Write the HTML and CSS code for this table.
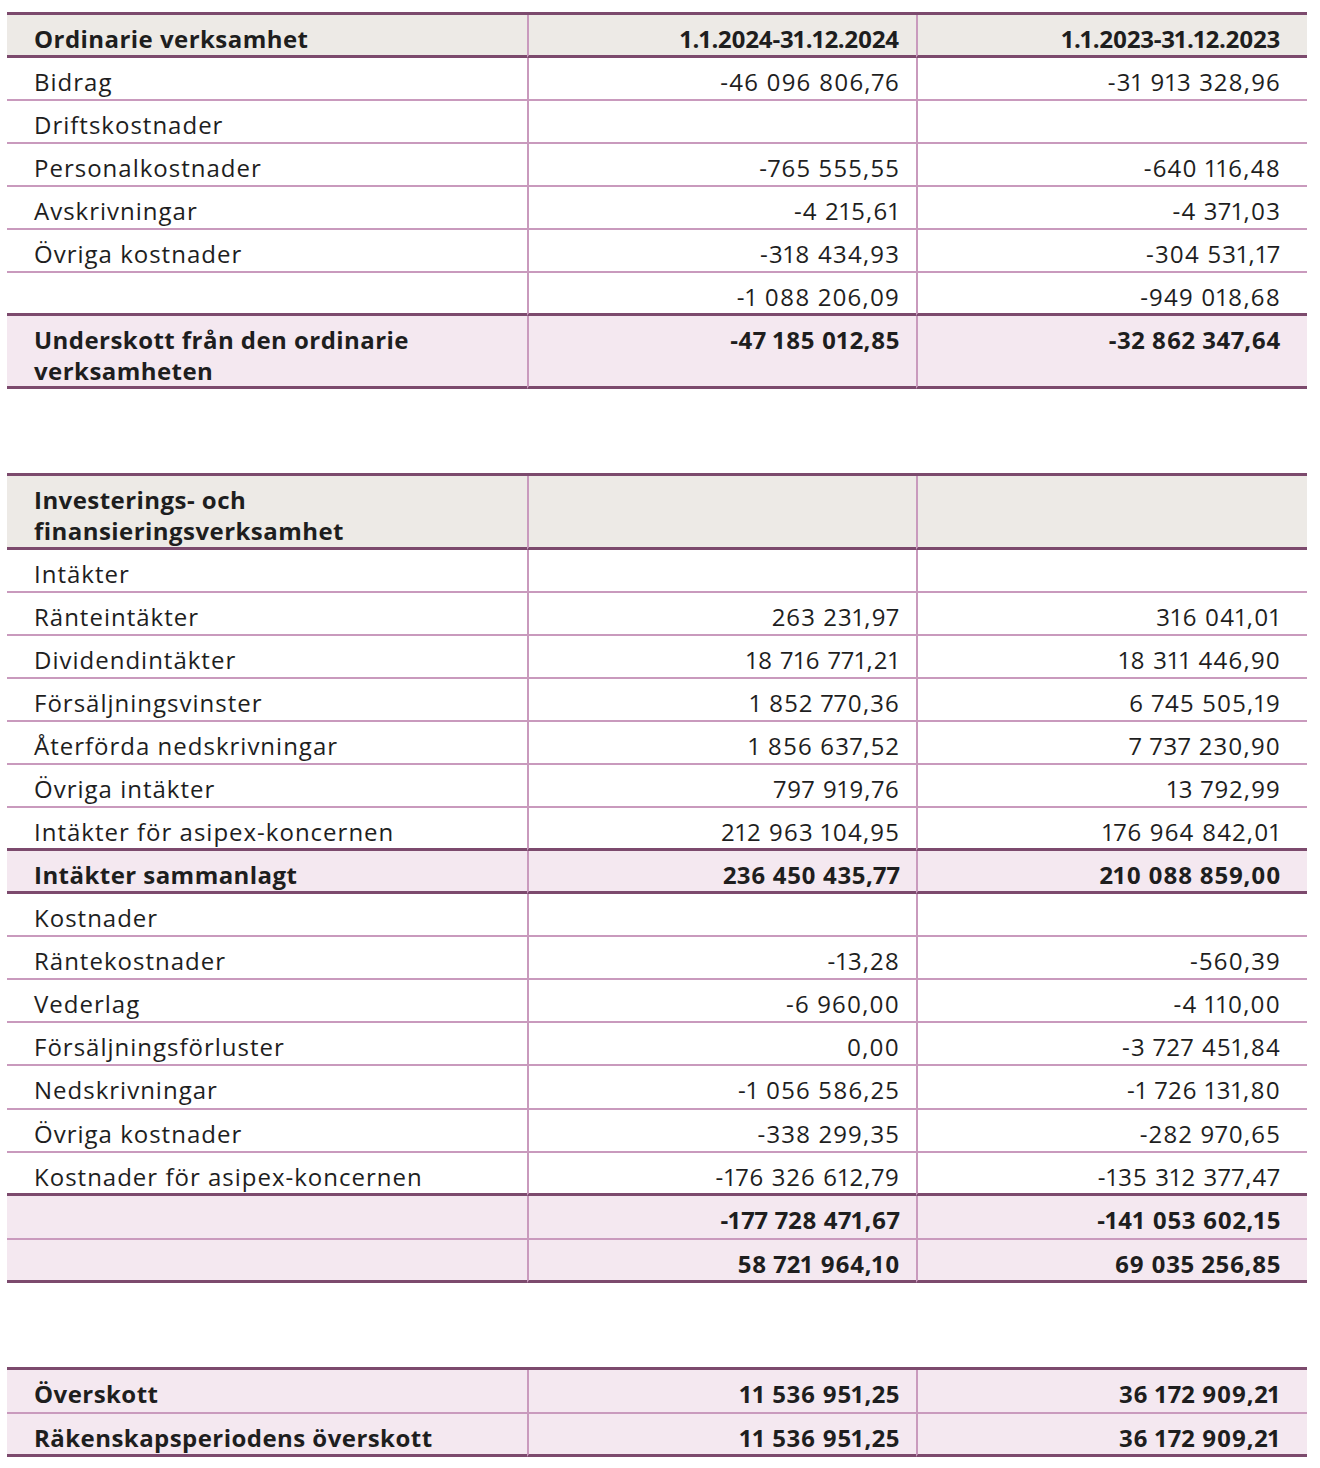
FILE: index.html
```html
<!DOCTYPE html>
<html lang="sv">
<head>
<meta charset="utf-8">
<title>Resultaträkning</title>
<link rel="stylesheet" href="styles.css">
</head>
<body>
<main class="page">
  <table class="fin">
    <colgroup><col class="c1"><col class="c2"><col class="c3"></colgroup>
    <tr class="head thick">
      <td>Ordinarie verksamhet</td>
      <td class="num date">1.1.2024-31.12.2024</td>
      <td class="num date">1.1.2023-31.12.2023</td>
    </tr>
    <tr><td>Bidrag</td><td class="num">-46 096 806,76</td><td class="num">-31 913 328,96</td></tr>
    <tr><td>Driftskostnader</td><td class="num"></td><td class="num"></td></tr>
    <tr><td>Personalkostnader</td><td class="num">-765 555,55</td><td class="num">-640 116,48</td></tr>
    <tr><td>Avskrivningar</td><td class="num">-4 215,61</td><td class="num">-4 371,03</td></tr>
    <tr><td>Övriga kostnader</td><td class="num">-318 434,93</td><td class="num">-304 531,17</td></tr>
    <tr class="thick"><td></td><td class="num">-1 088 206,09</td><td class="num">-949 018,68</td></tr>
    <tr class="sum thick two"><td>Underskott från den ordinarie verksamheten</td><td class="num">-47 185 012,85</td><td class="num">-32 862 347,64</td></tr>
  </table>

  <table class="fin gap">
    <colgroup><col class="c1"><col class="c2"><col class="c3"></colgroup>
    <tr class="head thick two">
      <td>Investerings- och<br>finansieringsverksamhet</td>
      <td class="num"></td>
      <td class="num"></td>
    </tr>
    <tr><td>Intäkter</td><td class="num"></td><td class="num"></td></tr>
    <tr><td>Ränteintäkter</td><td class="num">263 231,97</td><td class="num">316 041,01</td></tr>
    <tr><td>Dividendintäkter</td><td class="num">18 716 771,21</td><td class="num">18 311 446,90</td></tr>
    <tr><td>Försäljningsvinster</td><td class="num">1 852 770,36</td><td class="num">6 745 505,19</td></tr>
    <tr><td>Återförda nedskrivningar</td><td class="num">1 856 637,52</td><td class="num">7 737 230,90</td></tr>
    <tr><td>Övriga intäkter</td><td class="num">797 919,76</td><td class="num">13 792,99</td></tr>
    <tr class="thick"><td>Intäkter för asipex-koncernen</td><td class="num">212 963 104,95</td><td class="num">176 964 842,01</td></tr>
    <tr class="sum thick"><td>Intäkter sammanlagt</td><td class="num">236 450 435,77</td><td class="num">210 088 859,00</td></tr>
    <tr><td>Kostnader</td><td class="num"></td><td class="num"></td></tr>
    <tr><td>Räntekostnader</td><td class="num">-13,28</td><td class="num">-560,39</td></tr>
    <tr><td>Vederlag</td><td class="num">-6 960,00</td><td class="num">-4 110,00</td></tr>
    <tr><td>Försäljningsförluster</td><td class="num">0,00</td><td class="num">-3 727 451,84</td></tr>
    <tr class="tall"><td>Nedskrivningar</td><td class="num">-1 056 586,25</td><td class="num">-1 726 131,80</td></tr>
    <tr><td>Övriga kostnader</td><td class="num">-338 299,35</td><td class="num">-282 970,65</td></tr>
    <tr class="thick"><td>Kostnader för asipex-koncernen</td><td class="num">-176 326 612,79</td><td class="num">-135 312 377,47</td></tr>
    <tr class="sum tall"><td></td><td class="num">-177 728 471,67</td><td class="num">-141 053 602,15</td></tr>
    <tr class="sum thick"><td></td><td class="num">58 721 964,10</td><td class="num">69 035 256,85</td></tr>
  </table>

  <table class="fin gap">
    <colgroup><col class="c1"><col class="c2"><col class="c3"></colgroup>
    <tr class="sum tall"><td>Överskott</td><td class="num">11 536 951,25</td><td class="num">36 172 909,21</td></tr>
    <tr class="sum thick"><td>Räkenskapsperiodens överskott</td><td class="num">11 536 951,25</td><td class="num">36 172 909,21</td></tr>
  </table>
</main>
</body>
</html>
```
FILE: styles.css
```css
html, body {
  margin: 0;
  padding: 0;
  background: #ffffff;
}

.page {
  padding: 12px 13px 12px 7px;
  font-family: "Open Sans", "Liberation Sans", sans-serif;
  color: #1e1e1e;
}

.fin {
  width: 1300px;
  table-layout: fixed;
  border-collapse: separate;
  border-spacing: 0;
  border-top: 3px solid #7c4a6d;
}

.fin.gap {
  margin-top: 84px;
}

.c1 { width: 520px; }
.c2 { width: 389px; }
.c3 { width: 391px; }

.fin td {
  box-sizing: border-box;
  height: 43px;
  padding: 8px 27px 0 27px;
  font-size: 24px;
  line-height: 31px;
  letter-spacing: 1px;
  vertical-align: top;
  text-align: left;
  border-bottom: 2px solid #c99abd;
  white-space: nowrap;
}

.fin td + td {
  border-left: 2px solid #c99abd;
}

.fin td.num {
  text-align: right;
  letter-spacing: 1.2px;
  padding-right: 26px;
  font-variant-numeric: proportional-nums;
}

.fin td.num:nth-child(2) {
  padding-right: 16px;
}

.fin .tall td {
  height: 44px;
}

.fin .two td {
  height: 73px;
  white-space: normal;
}

.fin .head.two td {
  height: 74px;
}

.fin .thick td {
  border-bottom: 3px solid #7c4a6d;
}

.fin .head td,
.fin .sum td {
  font-weight: 700;
  letter-spacing: 0.45px;
}

.fin .head td {
  background: #edeae6;
}

.fin .sum td {
  background: #f4e8f0;
}

.fin .sum td.num {
  letter-spacing: 0.5px;
}

.fin .head td.date {
  letter-spacing: -0.2px;
  padding-right: 27px;
}

.fin .head td.date:nth-child(2) {
  padding-right: 17px;
}
```
